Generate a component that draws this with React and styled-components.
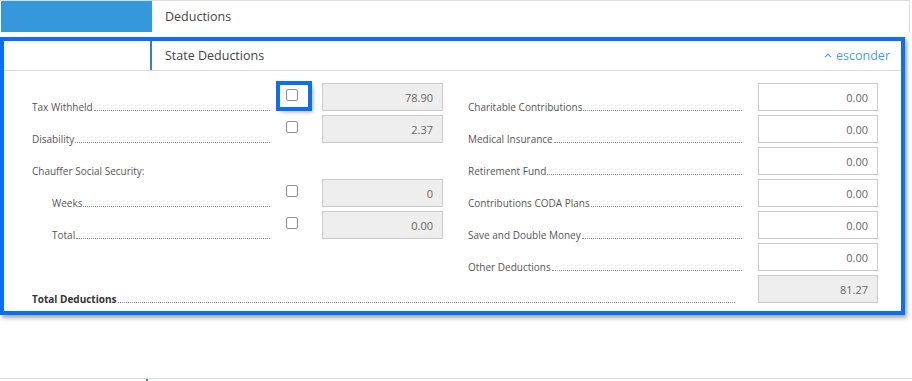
import React from "react";
import styled, { createGlobalStyle } from "styled-components";

const leftRows = [
  { label: "Tax Withheld", value: "78.90", check: true, focus: true },
  { label: "Disability", value: "2.37", check: true },
  { label: "Chauffer Social Security:", plain: true },
  { label: "Weeks", value: "0", check: true, indent: true },
  { label: "Total", value: "0.00", check: true, indent: true },
];

const rightRows = [
  { label: "Charitable Contributions", value: "0.00" },
  { label: "Medical Insurance", value: "0.00" },
  { label: "Retirement Fund", value: "0.00" },
  { label: "Contributions CODA Plans", value: "0.00" },
  { label: "Save and Double Money", value: "0.00" },
  { label: "Other Deductions", value: "0.00" },
];

function App() {
  return (
    <Page>
      <GlobalStyle />
      <TopPanel>
        <BlueCell />
        <PanelTitle>Deductions</PanelTitle>
      </TopPanel>

      <Section>
        <SectionHeader>
          <SideCell />
          <PanelTitle>State Deductions</PanelTitle>
          <Toggle>
            <svg width="8" height="5" viewBox="0 0 8 5">
              <path d="M1 4.2 L4 1.2 L7 4.2" fill="none" stroke="#4a9fdb" strokeWidth="1.2" />
            </svg>
            esconder
          </Toggle>
        </SectionHeader>

        <Body>
          <Column>
            {leftRows.map((row) => (
              <Row key={row.label}>
                <Label $indent={row.indent} $plain={row.plain}>
                  <span>{row.label}</span>
                </Label>
                {row.check && (
                  <CheckSlot>
                    <CheckWrap $focus={row.focus}>
                      <Check type="checkbox" readOnly />
                    </CheckWrap>
                  </CheckSlot>
                )}
                {row.value && <Field $readonly readOnly value={row.value} $w={121} />}
              </Row>
            ))}
          </Column>
          <Column>
            {rightRows.map((row) => (
              <Row key={row.label} $gap={16}>
                <Label>
                  <span>{row.label}</span>
                </Label>
                <Field readOnly value={row.value} $w={120} />
              </Row>
            ))}
          </Column>
          <TotalRow>
            <Label $bold>
              <span>Total Deductions</span>
            </Label>
            <Field $readonly readOnly value="81.27" $w={120} />
          </TotalRow>
        </Body>
      </Section>

      <NextPanel>
        <SideCell />
      </NextPanel>
    </Page>
  );
}

const GlobalStyle = createGlobalStyle`
  body {
    margin: 0;
    background: #fff;
    font-family: "Open Sans", "Liberation Sans", sans-serif;
  }
`;

const Page = styled.div`
  width: 912px;
  height: 381px;
  overflow: hidden;
`;

const TopPanel = styled.div`
  display: flex;
  align-items: stretch;
  width: 908px;
  height: 31px;
  box-sizing: content-box;
  border-top: 1px solid #dcdcdc;
  border-right: 1px solid #dcdcdc;
  padding-left: 1px;
  margin-bottom: 5px;
`;

const BlueCell = styled.div`
  width: 151px;
  background: #3598db;
`;

const PanelTitle = styled.div`
  flex: 1;
  display: flex;
  align-items: center;
  padding-left: 13px;
  font-size: 12.5px;
  color: #444;
`;

const Section = styled.div`
  width: 905px;
  height: 278px;
  box-sizing: border-box;
  border: 4px solid #0a6ff5;
  box-shadow: 2px 3px 4px rgba(0, 0, 0, 0.35);
  display: flex;
  flex-direction: column;
`;

const SectionHeader = styled.div`
  display: flex;
  height: 29px;
  border-bottom: 1px solid #dcdcdc;
`;

const SideCell = styled.div`
  width: 146px;
  border-right: 2px solid #3a7fbd;
`;

const Toggle = styled.div`
  display: flex;
  align-items: center;
  gap: 4px;
  padding-right: 11px;
  font-size: 12.5px;
  color: #4a9fdb;
`;

const Body = styled.div`
  display: grid;
  grid-template-columns: 411px 410px;
  column-gap: 25px;
  row-gap: 4px;
  align-items: start;
  padding: 12px 23px 8px 28px;
`;

const Column = styled.div`
  display: flex;
  flex-direction: column;
  gap: 4px;
`;

const Row = styled.div`
  display: flex;
  align-items: flex-end;
  height: 28px;
  gap: ${(p) => p.$gap || 0}px;
`;

const TotalRow = styled(Row)`
  grid-column: 1 / span 2;
  gap: 23px;
`;

const Label = styled.div`
  flex: 1;
  min-width: 0;
  display: flex;
  align-items: flex-end;
  margin-bottom: -3px;
  padding-left: ${(p) => (p.$indent ? 20 : 0)}px;
  font-size: 10px;
  line-height: 14px;
  color: ${(p) => (p.$bold ? "#333" : "#555")};
  font-weight: ${(p) => (p.$bold ? 700 : 400)};
  white-space: nowrap;

  &::after {
    content: "";
    display: ${(p) => (p.$plain ? "none" : "block")};
    flex: 1;
    margin: 0 0 3px 1px;
    border-bottom: 1px dotted #8a8a8a;
  }
`;

const CheckSlot = styled.div`
  align-self: flex-start;
  width: 52px;
  height: 28px;
  padding: 2px 0 0 10px;
  box-sizing: border-box;
`;

const CheckWrap = styled.div`
  width: 28px;
  height: 22px;
  box-sizing: border-box;
  padding: 4px 0 0 6px;
  outline: ${(p) => (p.$focus ? "4px solid #0a6ff5" : "none")};
  box-shadow: ${(p) => (p.$focus ? "3px 3px 4px 2px rgba(0,0,0,0.3)" : "none")};
`;

const Check = styled.input`
  appearance: none;
  display: block;
  margin: 0;
  width: 12px;
  height: 12px;
  box-sizing: border-box;
  border: 1px solid #8f8f8f;
  border-radius: 2px;
  background: #fff;
`;

const Field = styled.input`
  width: ${(p) => p.$w}px;
  height: 28px;
  box-sizing: border-box;
  margin: 0;
  padding: 0 9px 0 6px;
  border: 1px solid #cbcbcb;
  border-radius: 0;
  background: ${(p) => (p.$readonly ? "#eeeeee" : "#fff")};
  font-family: "Open Sans", "Liberation Sans", sans-serif;
  font-size: 11px;
  color: #666;
  text-align: right;
  outline: none;
  align-self: flex-start;
`;

const NextPanel = styled.div`
  display: flex;
  height: 10px;
  margin-top: 63px;
  border-top: 1px solid #dcdcdc;
`;

export default App;
